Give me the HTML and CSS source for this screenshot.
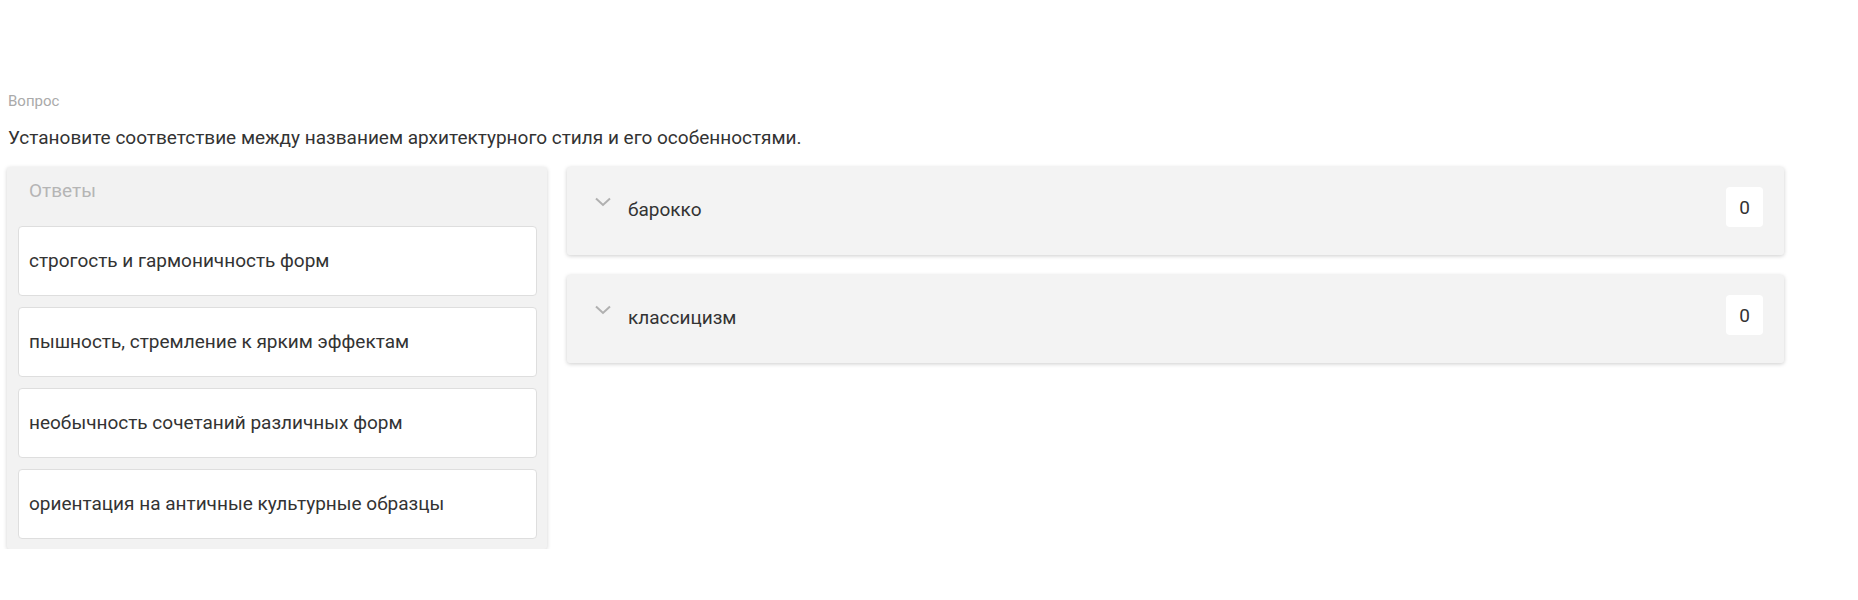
FILE: index.html
```html
<!DOCTYPE html>
<html lang="ru">
<head>
    <meta charset="UTF-8">
    <title>Вопрос</title>
    <link rel="stylesheet" href="styles.css">
</head>
<body>
    <div class="question">
        <div class="question-label">Вопрос</div>
        <div class="question-text">Установите соответствие между названием архитектурного стиля и его особенностями.</div>

        <div class="match">
            <div class="answers">
                <div class="answers-title">Ответы</div>
                <div class="answer">строгость и гармоничность форм</div>
                <div class="answer">пышность, стремление к ярким эффектам</div>
                <div class="answer">необычность сочетаний различных форм</div>
                <div class="answer">ориентация на античные культурные образцы</div>
            </div>

            <div class="targets">
                <div class="target">
                    <svg class="chevron" width="16" height="10" viewBox="0 0 16 10">
                        <path d="M1 1.5 L8 8 L15 1.5" fill="none" stroke="#b0b0b0" stroke-width="2"/>
                    </svg>
                    <span class="target-name">барокко</span>
                    <span class="count">0</span>
                </div>
                <div class="target">
                    <svg class="chevron" width="16" height="10" viewBox="0 0 16 10">
                        <path d="M1 1.5 L8 8 L15 1.5" fill="none" stroke="#b0b0b0" stroke-width="2"/>
                    </svg>
                    <span class="target-name">классицизм</span>
                    <span class="count">0</span>
                </div>
            </div>
        </div>
    </div>
</body>
</html>
```

FILE: styles.css
```css
body {
    margin: 0;
    background-color: #fff;
    font-family: Roboto, "Noto Sans", sans-serif;
    color: #333;
}

.question {
    padding: 91px 8px 0 8px;
}

.question-label {
    font-size: 15px;
    line-height: 20px;
    color: #aaa;
}

.question-text {
    font-size: 19px;
    line-height: 24px;
    margin-top: 15px;
    margin-bottom: 17px;
}

.match {
    display: grid;
    grid-template-columns: 540px 1217px;
    gap: 20px;
    align-items: start;
    margin-left: -1px;
}

.answers {
    background-color: #f2f2f2;
    border-radius: 3px;
    box-shadow: 0 1px 4px rgba(0, 0, 0, 0.18);
    padding: 12px 10px 10px 11px;
    display: flex;
    flex-direction: column;
    gap: 11px;
}

.answers-title {
    font-size: 19px;
    line-height: 24px;
    color: #b5b5b5;
    padding-left: 11px;
    margin-bottom: 12px;
}

.answer {
    background-color: #fff;
    border: 1px solid #dedede;
    border-radius: 4px;
    height: 70px;
    box-sizing: border-box;
    display: flex;
    align-items: center;
    padding: 0 0 2px 10px;
    font-size: 19px;
}

.targets {
    display: flex;
    flex-direction: column;
    gap: 20px;
}

.target {
    background-color: #f3f3f3;
    border-radius: 3px;
    box-shadow: 0 1px 4px rgba(0, 0, 0, 0.2);
    height: 88px;
    display: flex;
    align-items: center;
    padding: 0 21px 0 28px;
    box-sizing: border-box;
}

.chevron {
    align-self: flex-start;
    margin-top: 30px;
}

.target-name {
    font-size: 19px;
    margin-left: 17px;
    padding-bottom: 4px;
    flex: 1;
}

.count {
    background-color: #fff;
    border-radius: 4px;
    width: 37px;
    height: 40px;
    display: flex;
    align-items: center;
    justify-content: center;
    font-size: 19px;
    margin-top: -8px;
}
```
